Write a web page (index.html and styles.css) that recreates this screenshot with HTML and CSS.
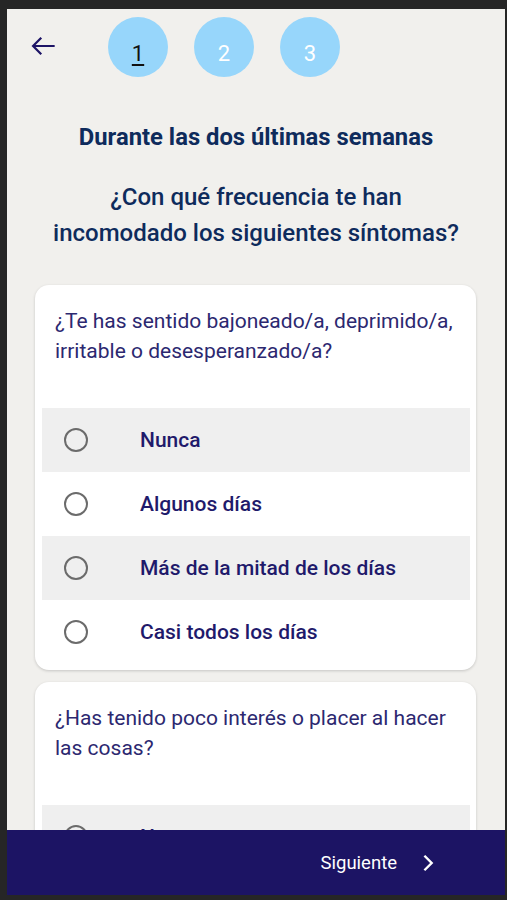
FILE: index.html
```html
<!DOCTYPE html>
<html lang="es">
<head>
<meta charset="utf-8">
<title>Cuestionario</title>
<link rel="stylesheet" href="styles.css">
</head>
<body>
<div class="screen">
  <div class="scroll">
    <header class="topbar">
      <button class="back" aria-label="Atrás">
        <svg viewBox="0 0 24 24" width="28" height="28"><path d="M22 12H3.5M10.5 5L3.5 12l7 7" fill="none" stroke="currentColor" stroke-width="1.9"/></svg>
      </button>
      <div class="steps">
        <span class="step current">1</span>
        <span class="step">2</span>
        <span class="step">3</span>
      </div>
    </header>

    <h1 class="title">Durante las dos últimas semanas</h1>
    <h2 class="subtitle">¿Con qué frecuencia te han incomodado los siguientes síntomas?</h2>

    <section class="card">
      <p class="question">¿Te has sentido bajoneado/a, deprimido/a, irritable o desesperanzado/a?</p>
      <ul class="options">
        <li class="option shaded"><span class="radio"></span><span class="label">Nunca</span></li>
        <li class="option"><span class="radio"></span><span class="label">Algunos días</span></li>
        <li class="option shaded"><span class="radio"></span><span class="label">Más de la mitad de los días</span></li>
        <li class="option"><span class="radio"></span><span class="label">Casi todos los días</span></li>
      </ul>
    </section>

    <section class="card">
      <p class="question">¿Has tenido poco interés o placer al hacer las cosas?</p>
      <ul class="options">
        <li class="option shaded"><span class="radio"></span><span class="label">Nunca</span></li>
      </ul>
    </section>
  </div>

  <footer class="bottombar">
    <span class="next-label">Siguiente</span>
    <svg class="chev" viewBox="0 0 24 24" width="22" height="22"><path d="M9 5l7 7-7 7" fill="none" stroke="#fff" stroke-width="2.6" stroke-linecap="square" stroke-linejoin="miter"/></svg>
  </footer>
</div>
</body>
</html>
```
FILE: styles.css
```css
html, body {
  margin: 0;
  padding: 0;
}
body {
  background: #262626;
  width: 507px;
  height: 900px;
  overflow: hidden;
  font-family: Roboto, "Noto Sans", Arial, sans-serif;
}
.screen {
  position: relative;
  margin: 9px 0 0 7px;
  width: 498px;
  height: 886px;
  background: #f1f0ed;
  overflow: hidden;
}
.scroll {
  display: flex;
  flex-direction: column;
}
.topbar {
  display: flex;
  align-items: center;
  height: 60px;
  padding-top: 8px;
}
.back {
  border: 0;
  background: none;
  padding: 0;
  margin-left: 22px;
  width: 28px;
  height: 28px;
  color: #1d1466;
  display: flex;
  align-self: flex-start;
  margin-top: 15px;
}
.steps {
  display: flex;
  gap: 26px;
  margin-left: 51px;
}
.step {
  width: 60px;
  height: 60px;
  border-radius: 50%;
  background: #97d6fb;
  color: #fff;
  font-size: 22px;
  display: flex;
  align-items: center;
  justify-content: center;
  padding-top: 12px;
  box-sizing: border-box;
}
.step.current {
  color: #111;
  text-decoration: underline;
  text-underline-offset: 3px;
  text-decoration-thickness: 2px;
}
.title {
  margin: 46px 0 0;
  text-align: center;
  font-size: 23.8px;
  line-height: 28px;
  font-weight: 700;
  color: #0e2b5c;
}
.subtitle {
  margin: 28px 40px 0;
  text-align: center;
  font-size: 24px;
  line-height: 36px;
  font-weight: 500;
  color: #0e2b5c;
}
.card {
  margin: 34px 29px 0 28px;
  background: #fff;
  border-radius: 14px;
  box-shadow: 0 1px 3px rgba(0,0,0,0.18);
  padding: 21px 6px 6px 7px;
}
.card + .card {
  margin-top: 12px;
}
.question {
  margin: 0 0 42px 13px;
  font-size: 21px;
  line-height: 30px;
  color: #2c2870;
}
.options {
  list-style: none;
  margin: 0;
  padding: 0;
}
.option {
  display: flex;
  align-items: center;
  height: 64px;
}
.option.shaded {
  background: #efefef;
}
.radio {
  width: 20px;
  height: 20px;
  border: 2px solid #6b6b6b;
  border-radius: 50%;
  margin-left: 22px;
  flex: none;
}
.label {
  margin-left: 52px;
  font-size: 21px;
  font-weight: 500;
  color: #1f1a6b;
}
.bottombar {
  position: absolute;
  left: 0;
  right: 0;
  bottom: 0;
  height: 65px;
  background: #1c1464;
  display: flex;
  align-items: center;
  justify-content: flex-end;
  padding-right: 66px;
}
.next-label {
  color: #fff;
  font-size: 18.5px;
  margin-right: 20px;
}
.chev {
  display: block;
}
```
